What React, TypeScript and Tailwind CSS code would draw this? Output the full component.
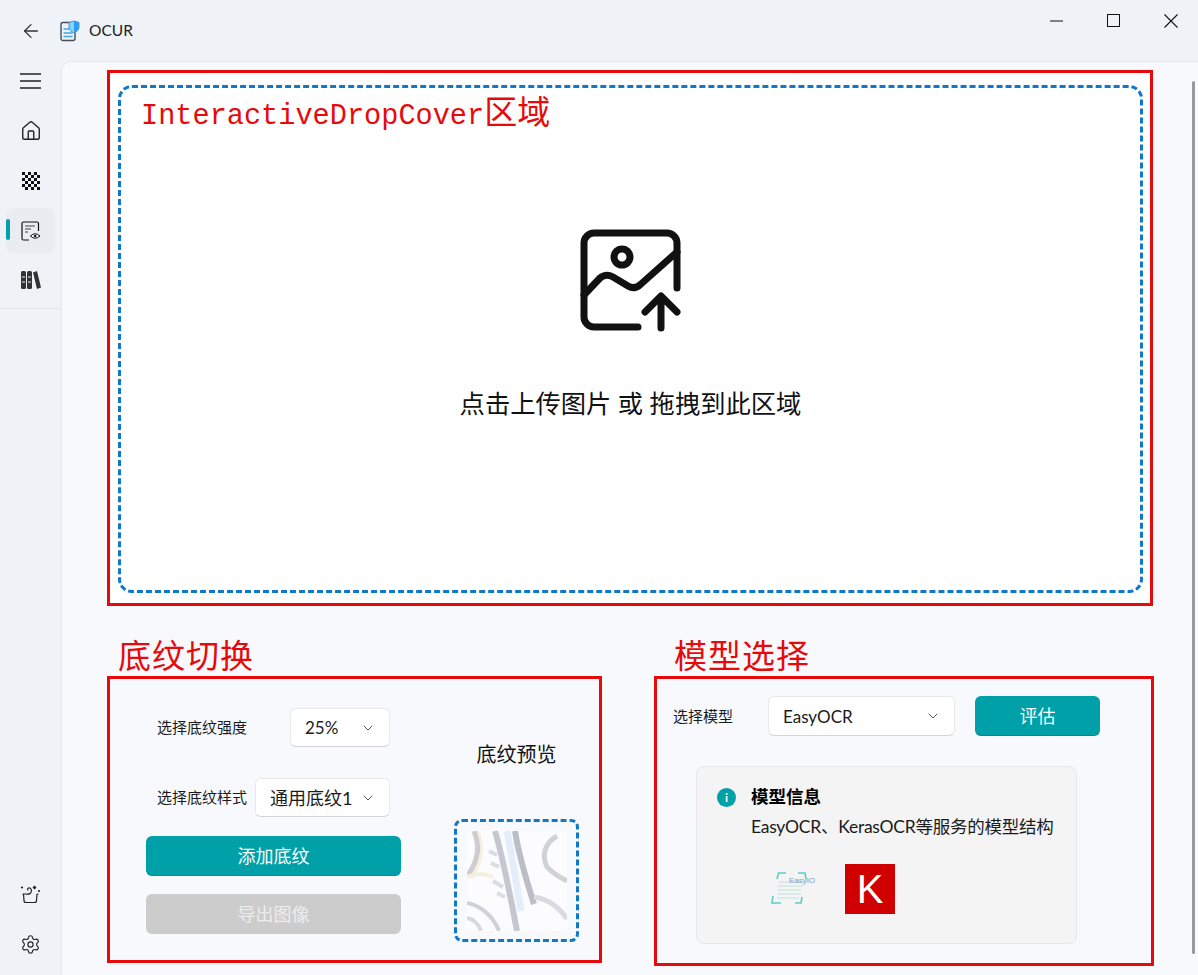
import { ArrowLeft, ChevronDown, Home, Settings } from "lucide-react";

const cjk = "font-['Lato','Noto_Sans_CJK_SC',sans-serif]";

function Select({ value, className }: { value: string; className: string }) {
  return (
    <div
      className={`flex h-[39px] items-center justify-between rounded-md border border-[#e8e8ea] border-b-[#d4d4d6] bg-white leading-none text-[#1b1b1b] ${className}`}
    >
      <span>{value}</span>
      <ChevronDown size={16} strokeWidth={1.5} className="text-[#555]" />
    </div>
  );
}

function PatternPreview() {
  return (
    <svg viewBox="0 0 100 100" className="h-[100px] w-[100px] bg-[#fcfcfe] blur-[0.5px]">
      <g fill="none">
        <path d="M9 0C16 16 13 32 3 46" stroke="#f6efe2" strokeWidth="6" />
        <path d="M7 0C14 16 11 30 1 44" stroke="#cfcbcf" strokeWidth="5" />
        <path d="M40 0C44 20 49 50 54 80" stroke="#e4eefb" strokeWidth="7" />
        <path d="M28 0C36 27 43 63 50 100" stroke="#c6c6d0" strokeWidth="6" />
        <path d="M48 0C51 20 58 45 67 73" stroke="#bdbdc9" strokeWidth="6" />
        <path d="M67 66C80 68 92 76 100 88" stroke="#dadae0" strokeWidth="5" />
        <path d="M90 5C78 12 74 24 80 36C86 42 92 46 100 50" stroke="#d0d3d4" strokeWidth="5" />
        <path d="M0 46C10 42 18 42 26 46" stroke="#f6efdf" strokeWidth="4" />
        <path d="M22 20L30 24M24 32L32 36M26 50L36 56M30 62L38 66" stroke="#dcdce2" strokeWidth="4" />
        <path d="M0 72C12 74 26 84 32 100" stroke="#d0d0d9" strokeWidth="4" />
        <path d="M0 87C6 88 11 92 14 100" stroke="#d8d8e2" strokeWidth="4" />
      </g>
    </svg>
  );
}

function EasyOcrLogo() {
  return (
    <svg width="44" height="36" viewBox="0 0 44 36">
      <g fill="none" stroke="#5ccdc4" strokeWidth="1.6">
        <path d="M6 8L7.500 2H15" />
        <path d="M27 2H34L35 8" />
        <path d="M2 25L1 32H10" />
        <path d="M24 32H30L31 26" />
      </g>
      <g stroke="#cfe8e4" strokeWidth="1.5">
        <path d="M8 11H32M7 15H32M7 19H30M6 23H30M6 27H28" />
      </g>
      <text x="18" y="12" fontSize="8" fill="#7f9cc4" fontFamily="Liberation Sans, sans-serif">EasyIO</text>
    </svg>
  );
}

export default function App() {
  return (
    <div className={`flex h-[975px] w-[1198px] flex-col overflow-hidden bg-[#eff2f6] ${cjk}`}>
      {/* TITLE BAR */}
      <div className="flex h-[61px] shrink-0 items-center">
        <div className="flex w-[61px] justify-center">
          <ArrowLeft size={22} strokeWidth={1.4} className="text-[#333]" />
        </div>
        <svg width="20" height="22" viewBox="0 0 20 22" className="-ml-[1px]">
          <rect x="1" y="2.500" width="14" height="18" rx="2" fill="#eef2f6" stroke="#445060" strokeWidth="1.4" />
          <path d="M3.500 9H9M3.500 13H12.500M3.500 16.500H12.500" stroke="#4aa3dc" strokeWidth="1.300" />
          <path d="M9 2.500L14 1L19 2.500V7C19 10 16.500 12 14 13C11.500 12 9 10 9 7Z" fill="#8fd0f6" stroke="#2f9fe8" strokeWidth="1" />
          <path d="M14 1L19 2.500V7C19 10 16.500 12 14 13Z" fill="#2f9fe8" />
        </svg>
        <span className="ml-[9px] text-[15.500px] text-[#222]">OCUR</span>
        <div className="mb-[20px] ml-auto flex items-center pr-[20px] text-[#111]">
          <svg width="13" height="2" viewBox="0 0 13 2" stroke="currentColor" strokeWidth="1">
            <path d="M0 1H13" />
          </svg>
          <svg width="13" height="13" viewBox="0 0 13 13" fill="none" stroke="currentColor" strokeWidth="1" className="ml-[44px]">
            <rect x=".5" y=".5" width="12" height="12" />
          </svg>
          <svg width="14" height="14" viewBox="0 0 14 14" fill="none" stroke="currentColor" strokeWidth="1.100" className="ml-[44px]">
            <path d="M.5 .5L13.500 13.500M13.500 .5L.5 13.500" />
          </svg>
        </div>
      </div>

      <div className="flex min-h-0 flex-1">
        {/* SIDEBAR */}
        <div className="flex w-[61px] shrink-0 flex-col items-center text-[#222]">
          <div className="w-full border-b border-[#e2e5ea] pb-[8px]">
            <div className="flex h-[40px] items-center justify-center">
              <svg width="21" height="16" viewBox="0 0 21 16" stroke="#222" strokeWidth="1.400">
                <path d="M0 1H21M0 8H21M0 15H21" />
              </svg>
            </div>
            <div className="mt-[10px] flex h-[40px] items-center justify-center">
              <Home size={22} strokeWidth={1.5} />
            </div>
            <div className="mt-[10px] flex h-[40px] items-center justify-center">
              <svg width="18" height="18" viewBox="0 0 18 18" fill="#111">
                <path d="M0 0H3V3H0ZM6 0H9V3H6ZM12 0H15V3H12ZM3 3H6V6H3ZM9 3H12V6H9ZM15 3H18V6H15ZM0 6H3V9H0ZM6 6H9V9H6ZM12 6H15V9H12ZM3 9H6V12H3ZM9 9H12V12H9ZM15 9H18V12H15ZM0 12H3V15H0ZM6 12H9V15H6ZM12 12H15V15H12ZM3 15H6V18H3ZM9 15H12V18H9ZM15 15H18V18H15Z" />
              </svg>
            </div>
            <div className="relative mx-[6px] mt-[7px] flex h-[45px] items-center justify-center rounded-lg bg-[#e9ecf0]">
              <div className="absolute top-[11px] left-0 h-[21px] w-[4px] rounded-full bg-[#00a0a8]" />
              <svg width="20" height="20" viewBox="0 0 20 20" fill="none" stroke="#111" strokeWidth="1.200">
                <path d="M8 19H2.500Q1 19 1 17.500V2.500Q1 1 2.500 1H16Q17.500 1 17.500 2.500V10" />
                <path d="M4 5H14M4 8H10M4 11H7" stroke="#444" />
                <path d="M9.500 15Q14 10.500 19 15Q14 19.500 9.500 15Z" fill="#e9ecf0" strokeWidth="1" />
                <circle cx="14.200" cy="15" r="1.200" fill="#111" stroke="none" />
              </svg>
            </div>
            <div className="mt-[7px] flex h-[40px] items-center justify-center">
              <svg width="20" height="18" viewBox="0 0 20 18" fill="#333">
                <rect x="0" y="0" width="5" height="18" rx="1.500" />
                <rect x="6" y="0" width="5" height="18" rx="1.500" />
                <path d="M12 1.500L16 0L20 16.500L16 18Z" />
                <path d="M1 6H4M1 11H4M7 6H10M7 11H10" stroke="#eff2f6" strokeWidth="1" />
              </svg>
            </div>
          </div>
          <div className="mt-auto flex flex-col items-center pb-[20px]">
            <svg width="21" height="19" viewBox="0 0 21 19" fill="none" stroke="#222" strokeWidth="1.200">
              <path d="M3.500 9L4 15.500Q4 17.500 6 17.500H14.500Q16.500 17.500 16.500 15.500L17 9" />
              <path d="M2.500 9H6Q11 10 11.500 5.500Q11 2.500 8.500 3Q7 3.500 8 5.500" />
              <path d="M17 9H18.500" />
              <path d="M14.500 .5L16.500 2.500L14.500 4.500L12.500 2.500Z" fill="#222" stroke="none" />
              <circle cx="2" cy="2.500" r="1.100" fill="#222" stroke="none" />
              <circle cx="19" cy="6" r="1.100" fill="#222" stroke="none" />
            </svg>
            <Settings size={21} strokeWidth={1.3} className="mt-[30px]" />
          </div>
        </div>

        {/* CONTENT */}
        <div className="relative min-w-0 flex-1 rounded-tl-[10px] border-t border-l border-[#e4e7ec] bg-[#f8f9fd] pt-[8px] pl-[45px]">
          <div className="absolute top-[19px] right-[3px] z-10 h-[873px] w-[3px] rounded-full bg-[#9a9a9e]" />

          {/* DROP AREA */}
          <div className="h-[536px] w-[1046px] border-[3px] border-[#e60a0a] bg-white pt-[12px] pr-[7px] pb-[10px] pl-[8px]">
            <div className="relative flex h-full flex-col items-center rounded-[14px] border-[3px] border-dashed border-[#0f78c8] pt-[141px]">
              <div className="absolute top-[2px] left-[20px] flex items-baseline whitespace-nowrap text-[#e60a0a]">
                <span className="font-['Liberation_Mono',monospace] text-[28.6px] leading-[40px]">InteractiveDropCover</span>
                <span className="font-['Noto_Sans_CJK_SC',sans-serif] text-[33px] leading-[40px]">区域</span>
              </div>
              <svg width="102" height="103" viewBox="0 0 102 103" fill="none" stroke="#111" strokeWidth="7" strokeLinecap="round" strokeLinejoin="round">
                <path d="M58 98H14A10 10 0 0 1 4 88V14A10 10 0 0 1 14 4H87A10 10 0 0 1 97 14V59" />
                <path d="M4 66L20 49Q26 44 33 48L48 57Q55 61 61 55L97 23" />
                <circle cx="42" cy="28" r="8" />
                <path d="M81 99V68M65 83L81 67L97 83" />
              </svg>
              <div className="mt-[53px] text-[25.300px] leading-[36px] text-[#111]">点击上传图片 或 拖拽到此区域</div>
            </div>
          </div>

          {/* BOTTOM ROW */}
          <div className="flex gap-[52px]">
            <div className="w-[495px]">
              <div className="flex h-[70px] items-end pl-[11px] font-['Noto_Sans_CJK_SC',sans-serif] text-[33px] leading-[44px] tracking-[1px] text-[#e60a0a]">底纹切换</div>
              <div className="flex h-[287px] border-[3px] border-[#e60a0a] pt-[29px] pl-[36px]">
                <div className="flex w-[255px] flex-col">
                  <div className="flex h-[39px] items-center pl-[11px] text-[15px] text-[#1b1b1b]">
                    <span className="w-[133px]">选择底纹强度</span>
                    <Select value="25%" className="w-[100px] pr-[13px] pl-[14px] text-[17px]" />
                  </div>
                  <div className="mt-[31px] flex h-[39px] items-center pl-[11px] text-[15px] text-[#1b1b1b]">
                    <span className="w-[98px]">选择底纹样式</span>
                    <Select value="通用底纹1" className="w-[135px] pr-[13px] pl-[14px] text-[18px]" />
                  </div>
                  <button className="mt-[19px] h-[40px] rounded-md border-b border-[#078a91] bg-[#00a0a8] pt-[2px] text-[18px] text-white">添加底纹</button>
                  <button className="mt-[18px] h-[40px] rounded-md bg-[#cccccc] text-[18px] text-[#ececec]">导出图像</button>
                </div>
                <div className="ml-[53px] flex w-[125px] flex-col items-center">
                  <div className="mt-[31px] text-[20px] leading-[30px] text-[#111]">底纹预览</div>
                  <div className="mt-[50px] flex h-[123px] w-[125px] shrink-0 items-center justify-center rounded-lg border-[3px] border-dashed border-[#0f78c8]">
                    <PatternPreview />
                  </div>
                </div>
              </div>
            </div>

            <div className="w-[500px]">
              <div className="flex h-[70px] items-end pl-[20px] font-['Noto_Sans_CJK_SC',sans-serif] text-[33px] leading-[44px] tracking-[1px] text-[#e60a0a]">模型选择</div>
              <div className="h-[290px] border-[3px] border-[#e60a0a] pt-[17px] pl-[16px]">
                <div className="flex h-[40px] items-center">
                  <span className="w-[95px] text-[15px] text-[#1b1b1b]">选择模型</span>
                  <Select value="EasyOCR" className="h-[40px] w-[187px] pr-[13px] pl-[14px] text-[17px]" />
                  <button className="ml-[20px] h-[40px] w-[125px] rounded-md border-b border-[#078a91] bg-[#00a0a8] pt-[1px] text-[18px] text-white">评估</button>
                </div>
                <div className="mt-[30px] ml-[23px] h-[178px] w-[381px] rounded-lg border border-[#e8e8e8] bg-[#f4f4f4] pt-[16px] pl-[20px]">
                  <div className="flex items-start">
                    <div className="mt-[5px] flex h-[19px] w-[19px] items-center justify-center rounded-full bg-[#00a0a8] text-[12px] leading-none font-bold text-white">i</div>
                    <div className="ml-[15px]">
                      <div className="text-[17.500px] leading-[28px] font-bold text-black">模型信息</div>
                      <div className="mt-[2px] text-[17.500px] leading-[28px] tracking-[-0.25px] whitespace-nowrap text-[#1b1b1b]">EasyOCR、KerasOCR等服务的模型结构</div>
                    </div>
                  </div>
                  <div className="mt-[23px] ml-[54px] flex items-center gap-[30px]">
                    <EasyOcrLogo />
                    <div className="flex h-[50px] w-[50px] items-center justify-center bg-[#d00000] font-['Liberation_Sans',sans-serif] text-[40px] leading-none text-white">K</div>
                  </div>
                </div>
              </div>
            </div>
          </div>
        </div>
      </div>
    </div>
  );
}
